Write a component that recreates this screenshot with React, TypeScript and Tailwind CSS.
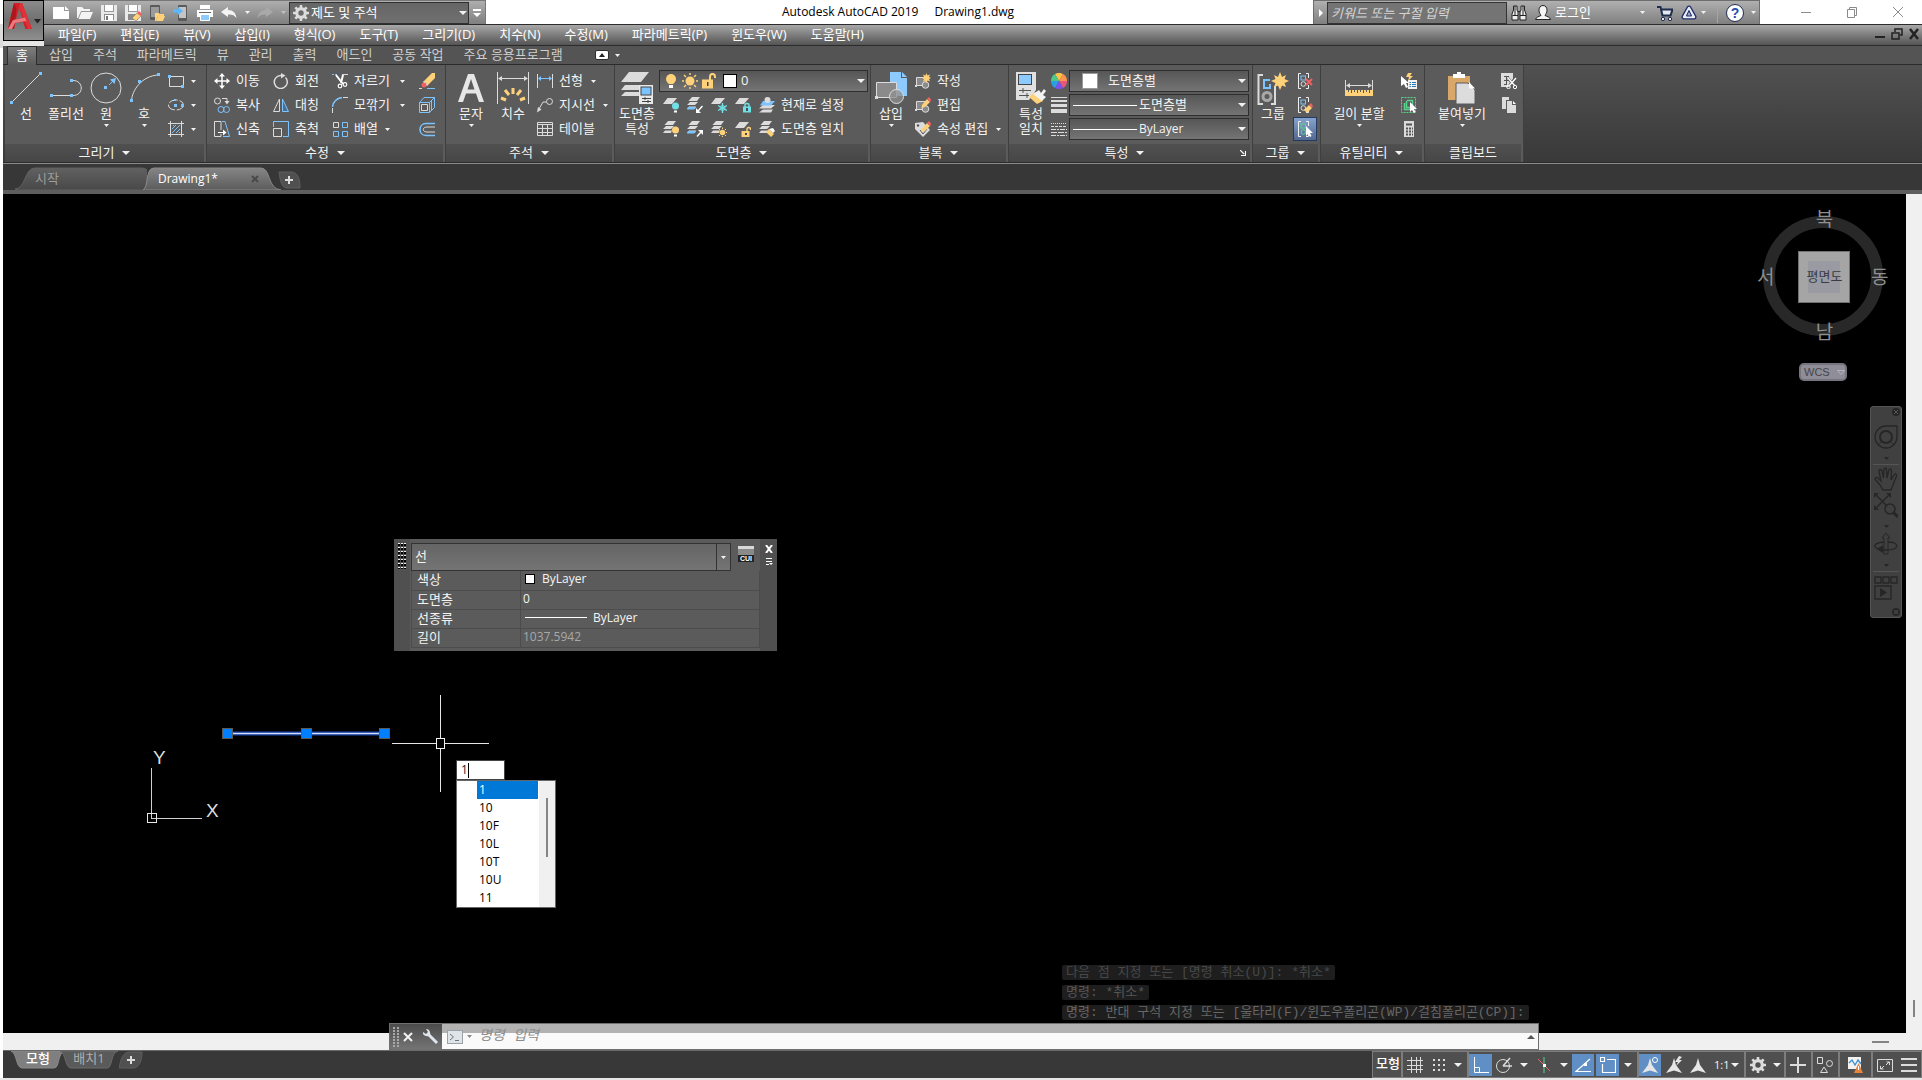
import React from "react";

type Kids = { children?: React.ReactNode };

/* ---------- shared drawing helpers ---------- */

const L = "#dcdcdc";
const B = "#7cc4ff";
const Y = "#ffd27a";

function Svg({ w = 16, h = 16, children }: Kids & { w?: number; h?: number }) {
  return (
    <svg width={w} height={h} viewBox={`0 0 ${w} ${h}`} fill="none" className="block shrink-0" aria-hidden="true">
      {children}
    </svg>
  );
}

function Dot({ x, y, s = 3 }: { x: number; y: number; s?: number }) {
  return <rect x={x} y={y} width={s} height={s} fill={B} />;
}

function Tri({ big = false, color = "#f2f2f2" }: { big?: boolean; color?: string }) {
  return big ? (
    <Svg w={8} h={4}><path d="M0 0H8L4 4Z" fill={color} /></Svg>
  ) : (
    <Svg w={5} h={3}><path d="M0 0H5L2.5 3Z" fill={color} /></Svg>
  );
}

/* ---------- icons: draw & modify ---------- */

const IcLine = () => (
  <Svg w={32} h={32}><path d="M2.5 29.5L29.5 2.5" stroke={L} /><Dot x={0} y={29} /><Dot x={29} y={0} /></Svg>
);
const IcPoly = () => (
  <Svg w={32} h={32}><path d="M3 23.5H21M23 8.500C34 8.500 34 23.500 23 23.500" stroke={L} /><Dot x={0} y={22} /><Dot x={20} y={22} /><Dot x={20} y={7} /></Svg>
);
const IcCircle = () => (
  <Svg w={32} h={32}><circle cx="16" cy="16" r="15" stroke={L} /><path d="M19 13L23 9" stroke={B} /><path d="M26 6L24.500 12L20 7.500Z" fill={B} /><Dot x={14} y={14} /></Svg>
);
const IcArc = () => (
  <Svg w={32} h={32}><path d="M3.500 29C4 18 14 4 30 3" stroke={L} /><Dot x={2} y={27} /><Dot x={10} y={8} /><Dot x={29} y={1} /></Svg>
);
const IcRect = () => (<Svg><path d="M1.500 3.500H15.500V13.500H1.500Z" stroke={L} /><Dot x={0} y={2} /><Dot x={13} y={12} /></Svg>);
const IcEllipse = () => (<Svg><ellipse cx="8" cy="8" rx="7.500" ry="5" stroke={L} strokeDasharray="9 2" /><Dot x={6} y={7} /><Dot x={6} y={2} s={2} /><Dot x={13} y={7} /></Svg>);
const IcHatch = () => (
  <Svg><path d="M2.500 0V16M13.500 0V16M0 2.500H16M0 13.500H16" stroke={L} /><path d="M4 8L8 4M4 12L12 4M8 12L12 8M5 5L6 4M11 12L12 11" stroke={B} /></Svg>
);
const IcMove = () => (
  <Svg><path d="M8 2V14M2 8H14" stroke="#fff" strokeWidth="1.500" /><path d="M8 0L11 3.500H5ZM8 16L11 12.500H5ZM0 8L3.500 5V11ZM16 8L12.500 5V11Z" fill="#fff" /></Svg>
);
const IcCopy = () => (
  <Svg><circle cx="3.500" cy="4" r="3" stroke={L} /><path d="M8 1.500H13V5" stroke={L} /><path d="M10.500 4H15.500L13 7.500Z" fill={L} /><circle cx="7" cy="12.500" r="3" stroke={B} /><circle cx="12.500" cy="12.500" r="3" stroke={B} /></Svg>
);
const IcStretch = () => (
  <Svg><path d="M7 15.500H.500V.500H7V9M7 13V15.500" stroke={L} /><path d="M4 11.500H11" stroke="#fff" /><path d="M9 8.500L12.500 11.500L9 14.500Z" fill="#fff" /><path d="M8 .500H11L15.500 15.500H9" stroke={B} /></Svg>
);
const IcRotate = () => (
  <Svg><path d="M12.500 4.500A6.500 6.500 0 1 1 8 2.500" stroke={L} strokeWidth="1.500" /><path d="M8 0L12.500 2.500L8 5.500Z" fill={L} /></Svg>
);
const IcMirror = () => (
  <Svg><path d="M6.500 2V14.500H.500Z" stroke={L} /><path d="M9.500 2V14.500H15.500Z" fill="#4a6f8f" stroke={B} /></Svg>
);
const IcScale = () => (<Svg><path d="M.500 6V.500H15.500V15.500H10" stroke={B} /><path d="M.500 7.500H8.500V15.500H.500Z" stroke={L} /></Svg>);
const IcTrim = () => (
  <Svg><path d="M0 1.500H6" stroke={B} strokeDasharray="2 1" /><path d="M10 1.500H16" stroke={L} /><path d="M4 2L11 11M11 2L9 10" stroke="#fff" strokeWidth="2" /><circle cx="8" cy="13" r="1.800" stroke="#fff" strokeWidth="1.200" /><circle cx="13" cy="11.500" r="1.800" stroke="#fff" strokeWidth="1.200" /></Svg>
);
const IcFillet = () => (<Svg><path d="M.500 10C1 5 5 1 10 .500" stroke={B} strokeWidth="1.500" /><path d="M11 .500H16M.500 11V16" stroke={L} /></Svg>);
const IcArray = () => (
  <Svg><path d="M1.500 1.500H6.500V6.500H1.500Z" stroke={L} /><path d="M10.500 1.500H15.500V6.500H10.500ZM1.500 10.500H6.500V15.500H1.500ZM10.500 10.500H15.500V15.500H10.500Z" stroke={B} /></Svg>
);
const IcErase = () => (
  <Svg><path d="M16 0V5L9 12L5 8L13 0Z" fill={Y} /><path d="M9 12L8 13L4 9L5 8Z" fill="#fff" /><circle cx="5" cy="12" r="2.500" fill="#f06060" /><path d="M0 15.500H3" stroke={L} /><path d="M8 15.500H16" stroke={B} /></Svg>
);
const IcExplode = () => (
  <Svg><path d="M.500 5.500H10.500V15.500H.500Z" stroke={B} /><path d="M2.500 7.500H8.500V13.500H2.500Z" stroke={L} /><path d="M.500 5.500L5 .500H15.500V10.500L10.500 15.500M10.500 5.500L15.500 .500M12.500 4V13" stroke={B} /></Svg>
);
const IcOffset = () => (
  <Svg><path d="M16 2.500H7C-1 2.500 -1 14.500 7 14.500H16" stroke={B} strokeWidth="1.500" /><path d="M16 6H8C3 6 3 11 8 11H16" stroke={L} /></Svg>
);

/* ---------- icons: annotation ---------- */

const IcText = () => (<Svg w={28} h={32}><path d="M1 30L11 2H17L27 30H22L19 21.500H9L6 30ZM10.500 17.500H17.500L14 7Z" fill="#e6e6e6" /></Svg>);
const IcDim = () => (
  <Svg w={32} h={32}><path d="M.500 0V32M31.500 0V32M3 6.500H29" stroke={L} /><path d="M1 6.500L5 4V9ZM31 6.500L27 4V9Z" fill={L} /><path d="M16 16V22M8 18L12 23M24 18L20 23M4 26L9 28M28 26L23 28" stroke={Y} strokeWidth="3" /></Svg>
);
const IcLinear = () => (<Svg><path d="M.500 1V15M15.500 1V15" stroke={L} /><path d="M3 5.500H13" stroke={B} /><path d="M1 5.500L4 3V8ZM15 5.500L12 3V8Z" fill={B} /></Svg>);
const IcLeader = () => (<Svg><circle cx="12.500" cy="4.500" r="3" stroke={L} /><path d="M9.500 5H6L2 12" stroke={L} /><path d="M0 15.500L1 10L4.500 12.500Z" fill={L} /></Svg>);
const IcTable = () => (<Svg><path d="M.500 1.500H15.500V14.500H.500ZM.500 3.500H15.500M.500 7.500H15.500M.500 11.500H15.500M5.500 3V14M10.500 3V14" stroke={L} /></Svg>);

/* ---------- icons: layers ---------- */

const IcLayerProps = () => (
  <Svg w={32} h={32}>
    <path d="M8 0H28L20 10H0ZM4 13H21L18 18H0ZM4 20H18V24H0Z" fill={L} />
    <rect x="18" y="13" width="14" height="19" fill="#e8e8e8" /><rect x="20" y="15" width="10" height="8" fill={B} stroke="#444" />
    <path d="M21 26.500H30M21 29.500H30M24 25V28M27 28V31" stroke="#444" />
  </Svg>
);
const Sheet = () => <path d="M4.500 1H14L9 7H0Z" fill={L} />;
const Sheets = () => (
  <><path d="M5 0H13L10 4H1.500ZM3 5H11L8 8H0Z" fill={L} /><path d="M2 9.500H9L8 12H0Z" fill={L} /></>
);
const IcLayOff = () => (<Svg><Sheet /><circle cx="12.500" cy="9" r="3.500" fill="#6fe0e6" /><path d="M11 14.500H14" stroke="#fff" strokeWidth="2" /></Svg>);
const IcLayIso = () => (<Svg><Sheets /><path d="M1 10H9L7 12.500H0Z" fill={B} /><path d="M15.500 9L11 14" stroke="#fff" strokeWidth="1.500" /><path d="M9 16V11L14 16Z" fill="#fff" /></Svg>);
const IcLayFreeze = () => (<Svg><Sheet /><path d="M11.500 6V16M7 8.500L16 13.500M7 13.500L16 8.500" stroke="#6fe0e6" strokeWidth="1.400" /><circle cx="11.500" cy="11" r="2.500" stroke="#6fe0e6" /></Svg>);
const IcLayLock = () => (<Svg><Sheet /><path d="M10 10V8C10 6 14 6 14 8V10" stroke="#6fe0e6" strokeWidth="1.400" /><rect x="8" y="9.500" width="8" height="6" fill="#6fe0e6" /><rect x="11" y="11" width="2" height="3" fill="#4a4a4a" /></Svg>);
const IcLaySet = () => (<Svg><path d="M4 8H16L12 11.500H0ZM4 12.500H14L12 15.500H0Z" fill={L} /><path d="M4 4H16L12 8.500H1Z" fill={B} /><circle cx="8.500" cy="3" r="3" fill={L} /></Svg>);
const IcLayOn = () => (<Svg><Sheets /><circle cx="12.500" cy="9" r="3.500" fill={Y} /><path d="M11 14.500H14" stroke="#fff" strokeWidth="2" /></Svg>);
const IcLayUniso = () => (<Svg><Sheets /><path d="M1 10H9L7 12.500H0Z" fill={B} /><path d="M10 15.500L14 11" stroke="#fff" strokeWidth="1.500" /><path d="M16 9V14L11 9Z" fill="#fff" /></Svg>);
const IcLayThaw = () => (<Svg><Sheets /><circle cx="11.500" cy="11.500" r="2.800" fill={Y} /><path d="M11.500 6.500V8M11.500 15V16M6.500 11.500H8M15 11.500H16M8 8L9 9M15 8L14 9M8 15L9 14M15 15L14 14" stroke={Y} /></Svg>);
const IcLayUnlock = () => (<Svg><Sheet /><path d="M12 10V8C12 6 15.500 6 15.500 8V9" stroke={Y} strokeWidth="1.400" /><rect x="6.500" y="10" width="8" height="6" fill={Y} /><rect x="10" y="12" width="2" height="2" fill="#4a4a4a" /></Svg>);
const IcLayMatch = () => (<Svg><Sheets /><path d="M7 11L10 8L15 13L12 16Z" fill={Y} /><path d="M10 8L14 7L16 10L14 12Z" fill="#fff" /></Svg>);
const IcBulb = () => (<Svg><circle cx="8" cy="6" r="5" fill={Y} /><path d="M5.500 7H10.500V11H5.500Z" fill={Y} /><rect x="6" y="12" width="4" height="3" fill="#fff" /></Svg>);
const IcSun = () => (<Svg><circle cx="8" cy="8" r="4.500" fill={Y} /><path d="M8 0V2M8 14V16M0 8H2M14 8H16M2 2L4 4M14 2L12 4M2 14L4 12M14 14L12 12" stroke={Y} strokeWidth="1.400" /></Svg>);
const IcUnlock = () => (<Svg><path d="M9 7V3.500C9 0 14 0 14 3.500V5" stroke={Y} strokeWidth="2" /><rect x="1" y="6.500" width="11" height="9" fill={Y} /><rect x="6" y="9" width="1.500" height="4" fill="#444" /></Svg>);

/* ---------- icons: block, properties, group, utilities, clipboard ---------- */

const IcInsert = () => (
  <Svg w={32} h={34}><path d="M15 0H26V6H32V24H15Z" fill="#8ccaff" /><path d="M27 0L32 5H27Z" fill="#8ccaff" /><path d="M1.500 10.500H21.500V25.500H1.500Z" fill="#8a8a8a" stroke={L} /><circle cx="21.500" cy="24.500" r="7" fill="#8f8f8f" fillOpacity=".75" stroke={L} /><rect x="0" y="24" width="3" height="3" fill={L} /></Svg>
);
const BlockBase = () => (<><path d="M1.500 4.500H11V12.500H1.500Z" fill="#8a8a8a" stroke={L} /><circle cx="10.500" cy="12" r="3.300" fill="#8a8a8a" stroke={L} /><rect x="0" y="12" width="2" height="2" fill={L} /></>);
const Pencil = () => (<><path d="M7 8L12 2L15 5L10 10L6.500 11Z" fill={Y} /><path d="M12 2L14 0L16.500 3L15 5Z" fill="#f06060" /></>);
const IcBlkNew = () => (<Svg><BlockBase /><path d="M11.500 0L12.500 2.500L15 1.500L14 4L16 5L14 6L15 8.500L12.500 7.500L11.500 10L10.500 7.500L8 8.500L9 6L7 5L9 4L8 1.500L10.500 2.500Z" fill={Y} /></Svg>);
const IcBlkEdit = () => (<Svg><BlockBase /><Pencil /></Svg>);
const IcAttr = () => (<Svg><path d="M0 2L8 1L15 9L8 16L0 8Z" fill={L} /><circle cx="3" cy="4.500" r="1.200" fill="#555" /><path d="M5 9L8 13L12 8" stroke="#555" /><Pencil /></Svg>);
const IcMatch = () => (
  <Svg w={32} h={32}><path d="M1 0H21V18L14 28H1Z" fill="#e0e0e0" /><rect x="3.500" y="2.500" width="13" height="10" fill="#8ccaff" stroke="#444" /><path d="M4 18.500H16M4 23.500H14M8 16V21M12 21V26" stroke="#555" /><path d="M14 25L20 20L28 29L22 32Z" fill={Y} /><path d="M18 22L24 18L26 21L29 17L31 19L28 23L31 25L27 29Z" fill="#f2f2f2" /></Svg>
);
const IcWheel = () => (
  <Svg><path d="M8 8L4 1A8 8 0 0 1 12 1Z" fill="#ffc24a" /><path d="M8 8L12 1A8 8 0 0 1 16 8Z" fill="#ff944d" /><path d="M8 8H16A8 8 0 0 1 12 15Z" fill="#e8587a" /><path d="M8 8L12 15A8 8 0 0 1 4 15Z" fill="#7b52f0" /><path d="M8 8L4 15A8 8 0 0 1 0 8Z" fill="#2c9fe0" /><path d="M8 8H0A8 8 0 0 1 4 1Z" fill="#4fc98a" /></Svg>
);
const IcWeights = () => (<Svg><path d="M0 .500H16" stroke={L} /><path d="M0 4H16" stroke={L} strokeWidth="2" /><path d="M0 8.500H16" stroke={L} strokeWidth="3" /><path d="M0 14H16" stroke={L} strokeWidth="4" /></Svg>);
const IcTypes = () => (<Svg><path d="M0 2.500H16" stroke={L} strokeDasharray="1 1" /><path d="M0 5.500H16" stroke={L} strokeDasharray="3 1" /><path d="M0 8.500H16M0 14.500H16" stroke={L} strokeDasharray="5 1 2 1" /><path d="M0 11.500H16" stroke={L} strokeDasharray="6 1" /></Svg>);
const IcGroup = () => (
  <Svg w={32} h={34}><path d="M6 3H1.500V32H6M14 32H18V14" stroke={L} strokeWidth="2" /><path d="M8 8H13M7 7V16H13V12" stroke={B} strokeWidth="2" /><circle cx="10" cy="24.500" r="4" stroke="#a8a8a8" strokeWidth="3" /><path d="M23 0L25 5L29 3L27.500 7L32 9L27.500 11L29 15L25 13.500L23 18L21 13.500L17 15L18.500 11L14 9L18.500 7L17 3L21 5Z" fill={Y} /></Svg>
);
const GroupBase = ({ c = B, r = L }: { c?: string; r?: string }) => (<><path d="M4 .500H1.500V15.500H4M9 .500H11.500V5M9 15.500H11.500V12" stroke="#f0f0f0" /><rect x="4" y="3" width="4.500" height="4" stroke={c} /><circle cx="6.300" cy="11" r="2.300" stroke={r} /></>);
const IcUngroup = () => (<Svg><GroupBase /><path d="M9 6L15 12M15 6L9 12" stroke="#f06060" strokeWidth="2" /></Svg>);
const IcGroupEdit = () => (<Svg><GroupBase /><path d="M7 13L12 8L15 11L10 16Z" fill={Y} /><path d="M12 8L14 6L16 9L15 11Z" fill="#f06060" /></Svg>);
const IcGroupSel = () => (<Svg><GroupBase c="#58d68d" r="#58d68d" /><path d="M9 5V15L11 13L13 16L14.500 15L13 12H16Z" fill="#fff" /></Svg>);
const IcMeasure = () => (
  <Svg w={28} h={32}><path d="M.500 8V20M27.500 8V20M3 13.500H25" stroke={L} /><path d="M1 13.500L5 11V16ZM27 13.500L23 11V16Z" fill={L} /><rect x="0" y="18" width="28" height="6" fill={Y} /><path d="M3.500 18V20M6.500 18V21M9.500 18V20M12.500 18V21M15.500 18V20M18.500 18V21M21.500 18V20M24.500 18V21" stroke="#5b5b5b" /></Svg>
);
const IcQuickSel = () => (<Svg><path d="M0 3V13L3 11L5 15L7 14L5 10H8Z" fill="#fff" /><path d="M7 0L11 0L9 3H12L7 8L8 4H5Z" fill={Y} /><rect x="7" y="7" width="9" height="9" fill="#f2f2f2" /><path d="M8.500 9.500H10M8.500 11.500H10M8.500 13.500H10M11 9.500H15M11 11.500H15M11 13.500H15" stroke="#2a78b8" /></Svg>);
const IcSelAll = () => (<Svg><path d="M.500 .500H14.500V15.500H.500Z" stroke="#58d68d" strokeDasharray="2 1" /><path d="M6 3.500H11.500V10M3.500 6V12.500H9M5.500 4V10.500H9" stroke="#58d68d" strokeWidth="1.500" /><path d="M9 5V15L11 13L13 16L14.500 15L13 12H16Z" fill="#fff" /></Svg>);
const IcCalc = () => (<Svg><rect x="3" y="0" width="10" height="16" fill={L} /><path d="M5 3.500H11" stroke="#555" strokeWidth="2" /><path d="M5 7.500H12M5 10.500H12M5 13.500H12" stroke="#555" strokeWidth="2" strokeDasharray="2 1" /></Svg>);
const IcPaste = () => (
  <Svg w={28} h={32}><rect x="0" y="4" width="22" height="24" fill="#d9a868" /><path d="M5 2H9V0H13V2H17V6H5Z" fill="#fff" /><path d="M8 11H20L27 18V32H8Z" fill={L} stroke="#5b5b5b" /><path d="M21 10L27 16.500H21Z" fill="#fff" /></Svg>
);
const IcCut = () => (<Svg><path d="M0 0H12V8L8 14H0Z" fill={L} /><path d="M3 3.500H8M3 7.500H9M3 11.500H6M5.500 3V12" stroke="#555" /><path d="M7 5L14 14M14 5L8 13" stroke="#555" strokeWidth="2.500" /><path d="M7 5L14 13M15 5L8 13" stroke="#fff" strokeWidth="1.400" /><circle cx="7.500" cy="14" r="1.700" stroke="#fff" /><circle cx="14" cy="14" r="1.700" stroke="#fff" /></Svg>);
const IcCopyClip = () => (<Svg><path d="M1 0H8V3H5V12H1Z" fill={L} /><path d="M6 4H11V8H15V16H6Z" fill={L} /><path d="M12 4L15 7H12Z" fill="#fff" /></Svg>);

/* ---------- icons: title bar ---------- */

const IcNew = () => (<Svg><path d="M0 2H11V6H16V14H0Z" fill="#fff" /><path d="M12 1L16 5H12Z" fill="#fff" /></Svg>);
const IcOpen = () => (<Svg><path d="M0 2H5L7 4H13V6H4L1 13H0Z" fill="#f4f4f4" /><path d="M4.500 7H16L13 14H1.500Z" fill="#f4f4f4" /></Svg>);
const IcSave = () => (<Svg><path d="M0 0H16V16H0Z" fill="#e9e9e9" /><path d="M3 0H13V7H3Z" fill="#9a9a9a" /><path d="M4 0H12V6H4Z" fill="#fff" /><path d="M3 9H13V15H3Z" fill="#8a8a8a" /><path d="M4 10H12V16H4Z" fill="#fff" /><path d="M5 11H7V15H5Z" fill="#777" /></Svg>);
const IcSaveAs = () => (<Svg><path d="M0 0H16V16H0Z" fill="#e9e9e9" /><path d="M3 0H13V7H3Z" fill="#9a9a9a" /><path d="M4 0H12V6H4Z" fill="#fff" /><path d="M3 9H13V15H3Z" fill="#8a8a8a" /><path d="M7 13L12 8L16 11L11 16Z" fill={Y} stroke="#666" strokeWidth=".5" /><path d="M12 8L14 6L16 8V11Z" fill="#f06060" /></Svg>);
const IcOpenMob = () => (<Svg><rect x="1" y="0" width="10" height="15" rx="1" fill="#5a5a5a" /><rect x="2" y="2" width="8" height="10" fill="#9b9b9b" /><path d="M6 8H10L11 9H15V11H9L7 16H6Z" fill={Y} /><path d="M9 11H16L14 16H7Z" fill={Y} /></Svg>);
const IcSaveMob = () => (<Svg><rect x="5" y="0" width="9" height="16" rx="1" fill="#5a5a5a" /><rect x="6" y="2" width="7" height="11" fill="#c4c4c4" /><path d="M0 6H6" stroke="#5ab8ff" strokeWidth="3" /><path d="M5 2L10 6L5 10Z" fill="#5ab8ff" /></Svg>);
const IcPrint = () => (<Svg><path d="M3 0H13V4H3Z" fill="#fff" /><path d="M0 5H16V12H0Z" fill="#fff" /><path d="M2 7.500H14" stroke="#666" /><path d="M3.500 9.500H12.500V15.500H3.500Z" fill="#8ccaff" stroke="#fff" /></Svg>);
const IcUndo = ({ c = "#f4f4f4" }: { c?: string }) => (<Svg><path d="M0 7L7 2V5C12 5 15 8 15.500 13C13 10 11 9 7 9.500V12Z" fill={c} /></Svg>);
const IcRedo = () => (<Svg><path d="M16 7L9 2V5C4 5 1 8 .500 13C3 10 5 9 9 9.500V12Z" fill="#a9a9a9" /></Svg>);
const IcGear = ({ c = L }: { c?: string }) => (
  <Svg><circle cx="8" cy="8" r="4.300" stroke={c} strokeWidth="3.200" /><path d="M8 0V3M8 13V16M0 8H3M13 8H16M2.300 2.300L4.500 4.500M11.500 11.500L13.700 13.700M2.300 13.700L4.500 11.500M11.500 4.500L13.700 2.300" stroke={c} strokeWidth="2.600" /></Svg>
);
const IcBinoc = () => (<Svg><path d="M2.500 1H6V5L7 7V15H1V9L2.500 5ZM10 1H13.500V5L15 9V15H9V7L10 5Z" fill="#eee" stroke="#222" /><path d="M7 6.500H9M1.500 10.500H7M9 10.500H15M4 1V10M12 1V10" stroke="#222" /></Svg>);
const IcUser = () => (<Svg><path d="M8 .500C11 .500 12 3 12 5.500C12 8 10.500 9 10 10.500C12 11.500 15 12 15.500 14.500H.500C1 12 4 11.500 6 10.500C5.500 9 4 8 4 5.500C4 3 5 .500 8 .500Z" fill="#f4f4f4" stroke="#222" /></Svg>);
const IcCart = () => (<Svg><path d="M0 2H3.500L5.500 10.500H13.500L15.500 4.500H4.500" stroke="#1f2c4d" strokeWidth="2" fill="#e4e8f0" /><circle cx="6" cy="14" r="1.700" fill="#e4e8f0" stroke="#1f2c4d" /><circle cx="13" cy="14" r="1.700" fill="#e4e8f0" stroke="#1f2c4d" /></Svg>);
const IcExchange = () => (<Svg><path d="M8 3L3 12H13Z" stroke="#1f2c6a" strokeWidth="5" strokeLinejoin="round" /><path d="M8 3L3 12H13Z" stroke="#e8ecf5" strokeWidth="2.500" strokeLinejoin="round" /><path d="M8 5.500L5.500 11H10.500Z" fill="#aab" stroke="#1f2c6a" /></Svg>);

/* ---------- building blocks ---------- */

function Big({ icon, label, label2, arrow = false, w }: { icon: React.ReactNode; label: string; label2?: string; arrow?: boolean; w: string }) {
  return (
    <button type="button" className={`flex shrink-0 flex-col items-center pt-[3px] ${w}`}>
      <span className="flex h-8 items-start justify-center">{icon}</span>
      <span className="mt-0.5 whitespace-nowrap leading-[15px]">{label}</span>
      {label2 && <span className="whitespace-nowrap leading-[15px]">{label2}</span>}
      {arrow && <span className="mt-[3px]"><Tri /></span>}
    </button>
  );
}

function Row({ icon, label, arrow, title }: { icon: React.ReactNode; label?: string; arrow?: string; title?: string }) {
  return (
    <button type="button" aria-label={label ? undefined : title} className="flex h-6 shrink-0 items-center whitespace-nowrap">
      {icon}
      {label && <span className="ml-1.5 pb-0.5 leading-[15px]">{label}</span>}
      {arrow && <span className={arrow}><Tri /></span>}
    </button>
  );
}

function Panel({ title, w, children, arrow = true, launcher = false }: Kids & { title: string; w: string; arrow?: boolean; launcher?: boolean }) {
  return (
    <section aria-label={title} className={`flex shrink-0 flex-col border-r border-[#3f3f3f] bg-[#5b5b5b] ${w}`}>
      <div className="flex h-[79px] items-start pt-1">{children}</div>
      <div className="mr-0.5 flex h-[18px] items-center justify-center gap-2 bg-linear-to-b from-[#505050] to-[#464646] leading-[15px]">
        {launcher && <span className="w-1" />}
        <span className={launcher ? "ml-auto pb-0.5" : "pb-0.5"}>{title}</span>
        {arrow && <Tri big />}
        {launcher && (
          <button type="button" aria-label="특성 팔레트" className="ml-auto flex w-3.5 justify-center">
            <Svg w={6} h={6}><path d="M0 0L4 4M5.500 1V5.500H1" stroke="#fff" strokeWidth="1.200" /></Svg>
          </button>
        )}
      </div>
    </section>
  );
}

function Combo({ label, options, children, cls = "" }: Kids & { label: string; options: string[]; cls?: string }) {
  return (
    <label className={`relative flex h-[22px] items-center border border-[#2e2e2e] bg-linear-to-b from-[#565656] to-[#747474] ${cls}`}>
      {children}
      <select aria-label={label} className="h-full min-w-0 flex-1 appearance-none bg-transparent pb-0.5 leading-[15px] outline-none">
        {options.map((o) => <option key={o}>{o}</option>)}
      </select>
      <span className="pointer-events-none absolute right-0.5"><Tri big /></span>
    </label>
  );
}

const MENUS = ["파일(F)", "편집(E)", "뷰(V)", "삽입(I)", "형식(O)", "도구(T)", "그리기(D)", "치수(N)", "수정(M)", "파라메트릭(P)", "윈도우(W)", "도움말(H)"];
const TABS = ["삽입", "주석", "파라메트릭", "뷰", "관리", "출력", "애드인", "공동 작업", "주요 응용프로그램"];
const SUGGESTIONS = ["1", "10", "10F", "10L", "10T", "10U", "11"];

/* ---------- title bar ---------- */

function TitleBar() {
  const tool = "flex w-6 justify-center";
  return (
    <div className="flex h-6 items-stretch bg-white">
      <div className="flex items-center border-t border-[#777] bg-linear-to-b from-[#aeaeae] to-[#7f7f7f] pl-[5px]">
        <button type="button" aria-label="새로 만들기" className={tool}><IcNew /></button>
        <button type="button" aria-label="열기" className={tool}><IcOpen /></button>
        <button type="button" aria-label="저장" className={tool}><IcSave /></button>
        <button type="button" aria-label="다른 이름으로 저장" className={tool}><IcSaveAs /></button>
        <button type="button" aria-label="모바일에서 열기" className={tool}><IcOpenMob /></button>
        <button type="button" aria-label="모바일에 저장" className={tool}><IcSaveMob /></button>
        <button type="button" aria-label="플롯" className={tool}><IcPrint /></button>
        <button type="button" aria-label="명령 취소" className="flex w-9 items-center gap-2 pl-1"><IcUndo /><Tri /></button>
        <button type="button" aria-label="명령 복구" className="flex w-9 items-center gap-2 pl-1"><IcRedo /><Tri color="#c0c0c0" /></button>
        <label className="relative flex h-[22px] w-[180px] items-center gap-0.5 border border-[#303030] bg-linear-to-b from-[#666] to-[#707070] pl-[3px] text-white">
          <IcGear />
          <select aria-label="작업공간" className="min-w-0 flex-1 appearance-none bg-transparent leading-[15px] outline-none"><option>제도 및 주석</option></select>
          <span className="pointer-events-none absolute right-px"><Tri big /></span>
        </label>
        <button type="button" aria-label="신속 접근 도구막대 사용자화" className="flex w-[17px] flex-col items-center gap-0.5 self-stretch border-r border-[#777] pt-2">
          <span className="h-0.5 w-2 bg-white" /><Tri big color="#fff" />
        </button>
      </div>
      <h1 className="flex flex-1 items-center justify-center gap-4 pb-px pr-[3px] text-[12px] leading-4 text-black">
        <span>Autodesk AutoCAD 2019</span><span>Drawing1.dwg</span>
      </h1>
      <div className="flex w-[447px] items-center border border-b-0 border-[#6d6d6d] bg-linear-to-b from-[#b0b0b0] to-[#7f7f7f] text-white">
        <button type="button" aria-label="검색 축소" className="flex w-[13px] justify-center"><Svg w={4} h={8}><path d="M0 0L4 4L0 8Z" fill="#fff" /></Svg></button>
        <input aria-label="검색" placeholder="키워드 또는 구절 입력" className="h-[22px] w-[180px] border border-[#333] bg-[#747474] px-[3px] italic leading-[15px] outline-none placeholder:text-[#d4d4d4]" />
        <button type="button" aria-label="찾기" className="ml-1 flex w-6"><IcBinoc /></button>
        <button type="button" className="flex items-center gap-1"><IcUser />로그인</button>
        <span className="ml-auto mr-3"><Tri /></span>
        <button type="button" aria-label="Autodesk App Store" className="flex w-6"><IcCart /></button>
        <button type="button" aria-label="연결 유지" className="flex w-9 items-center gap-1"><IcExchange /><Tri /></button>
        <span className="mr-2 h-5 w-px bg-[#a5a5a5]" />
        <button type="button" aria-label="도움말" className="mr-[3px] flex items-center gap-[7px]">
          <span className="flex size-[18px] items-center justify-center rounded-full border border-[#1f2c4d] bg-white font-['Liberation_Sans',sans-serif] text-[14px] font-bold leading-none text-[#1d4fb0]">?</span><Tri />
        </button>
      </div>
      <div className="flex w-[162px] items-center justify-end pr-px text-[#8a8a8a]">
        <button type="button" aria-label="최소화" className="flex w-[46px] justify-center"><Svg w={12} h={12}><path d="M1 6.500H11" stroke="currentColor" /></Svg></button>
        <button type="button" aria-label="이전 크기로 복원" className="flex w-[46px] justify-center"><Svg w={12} h={12}><path d="M1.500 3.500H8.500V11.500H1.500ZM3.500 3V1.500H10.500V9.500H9" stroke="currentColor" /></Svg></button>
        <button type="button" aria-label="닫기" className="flex w-[46px] justify-center"><Svg w={12} h={12}><path d="M1 1L11 11M11 1L1 11" stroke="currentColor" /></Svg></button>
      </div>
    </div>
  );
}

function MenuBar() {
  return (
    <nav className="flex h-[22px] items-center gap-6 border-y border-[#2b2b2b] bg-linear-to-b from-[#a8a8a8] to-[#555] pb-0.5 pl-3.5 pr-[3px] leading-[15px] text-white">
      {MENUS.map((m) => <button type="button" key={m} className="whitespace-nowrap">{m}</button>)}
      <div className="ml-auto flex items-center gap-1.5 text-[#222]">
        <button type="button" aria-label="도면 최소화"><Svg w={10} h={12}><path d="M0 9H10" stroke="#222" strokeWidth="2" /></Svg></button>
        <button type="button" aria-label="도면 복원"><Svg w={12} h={12}><path d="M1 5H8V11H1ZM4 4V1H11V7H9" stroke="#222" strokeWidth="1.500" /></Svg></button>
        <button type="button" aria-label="도면 닫기"><Svg w={10} h={12}><path d="M1 1L9 11M9 1L1 11" stroke="#222" strokeWidth="2.500" /></Svg></button>
      </div>
    </nav>
  );
}

function Header() {
  return (
    <header className="flex">
      <button type="button" aria-label="응용프로그램 메뉴" className="mb-[5px] flex w-[41px] shrink-0 items-start gap-0.5 border border-black bg-linear-to-b from-[#8a8a8a] via-[#707070] to-[#8f8f8f] pl-1 pt-0.5">
        <Svg w={24} h={27}>
          <path d="M6 0H14L24 26H17.500L15 19L7.500 20L6 26H0Z" fill="#cf2027" />
          <path d="M6 0L8.500 6L6 26H0Z" fill="#b0151c" />
          <path d="M11 5L8 16L14.500 15Z" fill="#7d6a6a" />
          <path d="M14 0L24 26H20L11 4L12 0Z" fill="#e03038" />
          <path d="M1 24L5 17L17 14.500L18.500 18L7 20L4 26H0Z" fill="#e87a7f" />
        </Svg>
        <span className="mt-4"><Svg w={7} h={5}><path d="M0 0H7L3.500 4.500Z" fill="#222" /></Svg></span>
      </button>
      <div className="min-w-0 flex-1"><TitleBar /><MenuBar /></div>
    </header>
  );
}

/* ---------- ribbon ---------- */

function RibbonTabs() {
  return (
    <div role="tablist" className="flex h-[19px] items-center gap-5 border-b border-[#2b2b2b] bg-[#545454] pl-1 leading-[15px] text-[#cfcfcf]">
      <button type="button" role="tab" aria-selected="true" className="-mr-2 -mb-px flex w-[30px] items-center justify-center self-stretch border border-b-0 border-[#2e2e2e] bg-linear-to-b from-[#7e7e7e] to-[#5b5b5b] pb-0.5 text-white">홈</button>
      {TABS.map((t) => <button type="button" role="tab" key={t} className="whitespace-nowrap pb-0.5">{t}</button>)}
      <button type="button" aria-label="리본 최소화" className="ml-3 flex items-center gap-1.5">
        <span className="flex h-2.5 w-3.5 items-center justify-center rounded-xs border border-[#2e2e2e] bg-white"><Svg w={6} h={4}><path d="M0 4L3 0L6 4Z" fill="#222" /></Svg></span>
        <Tri />
      </button>
    </div>
  );
}

function Ribbon() {
  return (
    <div className="flex border-b border-[#2b2b2b] bg-linear-to-b from-[#515151] to-[#393939] pl-0.5 text-[#f4f4f4]">
      <Panel title="그리기" w="w-[202px]">
        <div className="flex gap-1.5 pl-[5px]">
          <Big icon={<IcLine />} label="선" w="w-8" />
          <Big icon={<IcPoly />} label="폴리선" w="w-9" />
          <Big icon={<IcCircle />} label="원" arrow w="w-8" />
          <Big icon={<IcArc />} label="호" arrow w="w-8" />
          <div className="flex flex-col pl-0.5">
            <Row icon={<IcRect />} title="직사각형" arrow="ml-[7px]" />
            <Row icon={<IcEllipse />} title="타원" arrow="ml-[7px]" />
            <Row icon={<IcHatch />} title="해치" arrow="ml-[7px]" />
          </div>
        </div>
      </Panel>
      <Panel title="수정" w="w-[239px]">
        <div className="grid grid-cols-[59px_59px_87px_24px] pl-[7px]">
          <Row icon={<IcMove />} label="이동" /><Row icon={<IcRotate />} label="회전" /><Row icon={<IcTrim />} label="자르기" arrow="ml-2.5" /><Row icon={<IcErase />} title="지우기" />
          <Row icon={<IcCopy />} label="복사" /><Row icon={<IcMirror />} label="대칭" /><Row icon={<IcFillet />} label="모깎기" arrow="ml-2.5" /><Row icon={<IcExplode />} title="분해" />
          <Row icon={<IcStretch />} label="신축" /><Row icon={<IcScale />} label="축척" /><Row icon={<IcArray />} label="배열" arrow="ml-[7px]" /><Row icon={<IcOffset />} title="간격띄우기" />
        </div>
      </Panel>
      <Panel title="주석" w="w-[169px]">
        <div className="flex pl-[9px]">
          <Big icon={<IcText />} label="문자" arrow w="w-8" />
          <span className="w-2.5" />
          <Big icon={<IcDim />} label="치수" w="w-8" />
          <div className="flex flex-col pl-2">
            <Row icon={<IcLinear />} label="선형" arrow="ml-2" />
            <Row icon={<IcLeader />} label="지시선" arrow="ml-2" />
            <Row icon={<IcTable />} label="테이블" />
          </div>
        </div>
      </Panel>
      <Panel title="도면층" w="w-[256px]">
        <div className="flex flex-1 pl-1">
          <Big icon={<IcLayerProps />} label="도면층" label2="특성" w="w-9" />
          <div className="ml-1 flex flex-1 flex-col pr-0.5">
            <div className="flex h-6 items-center">
              <Combo label="도면층" options={["0"]} cls="flex-1 gap-[3px] pl-[3px]">
                <IcBulb /><IcSun /><IcUnlock /><span className="ml-[3px] mr-px size-3.5 border border-black bg-white" />
              </Combo>
            </div>
            <div className="flex gap-2 pl-1">
              <Row icon={<IcLayOff />} title="끄기" /><Row icon={<IcLayIso />} title="분리" /><Row icon={<IcLayFreeze />} title="동결" /><Row icon={<IcLayLock />} title="잠금" /><Row icon={<IcLaySet />} label="현재로 설정" />
            </div>
            <div className="flex gap-2 pl-1">
              <Row icon={<IcLayOn />} title="모두 켜기" /><Row icon={<IcLayUniso />} title="분리 해제" /><Row icon={<IcLayThaw />} title="모두 동결 해제" /><Row icon={<IcLayUnlock />} title="잠금 해제" /><Row icon={<IcLayMatch />} label="도면층 일치" />
            </div>
          </div>
        </div>
      </Panel>
      <Panel title="블록" w="w-[138px]">
        <div className="flex pl-1">
          <Big icon={<IcInsert />} label="삽입" arrow w="w-8" />
          <div className="flex flex-col pl-2">
            <Row icon={<IcBlkNew />} label="작성" />
            <Row icon={<IcBlkEdit />} label="편집" />
            <Row icon={<IcAttr />} label="속성 편집" arrow="ml-2" />
          </div>
        </div>
      </Panel>
      <Panel title="특성" w="w-[244px]" launcher>
        <div className="flex flex-1 pl-1.5">
          <Big icon={<IcMatch />} label="특성" label2="일치" w="w-8" />
          <div className="ml-1 flex flex-col"><Row icon={<IcWheel />} title="색상" /><Row icon={<IcWeights />} title="선가중치" /><Row icon={<IcTypes />} title="선종류" /></div>
          <div className="ml-0.5 flex flex-1 flex-col gap-0.5 pr-[3px] pt-px">
            <Combo label="객체 색상" options={["도면층별"]} cls="gap-2.5 pl-3"><span className="size-4 border border-[#999] bg-white" /></Combo>
            <Combo label="선가중치" options={["도면층별"]} cls="gap-0.5 pl-[3px]"><span className="h-px w-16 bg-white" /></Combo>
            <Combo label="선종류" options={["ByLayer"]} cls="gap-0.5 pl-[3px] text-[12px]"><span className="h-px w-16 bg-white" /></Combo>
          </div>
        </div>
      </Panel>
      <Panel title="그룹" w="w-[68px]">
        <div className="flex pl-1">
          <Big icon={<IcGroup />} label="그룹" w="w-8" />
          <div className="ml-1 flex flex-col">
            <span className="pl-1"><Row icon={<IcUngroup />} title="그룹 해제" /></span>
            <span className="pl-1"><Row icon={<IcGroupEdit />} title="그룹 편집" /></span>
            <span className="flex h-6 items-center border border-[#233a63] bg-linear-to-b from-[#86a3ce] to-[#53698f] px-[3px]"><Row icon={<IcGroupSel />} title="그룹 선택" /></span>
          </div>
        </div>
      </Panel>
      <Panel title="유틸리티" w="w-[104px]">
        <div className="flex pl-[11px]">
          <Big icon={<IcMeasure />} label="길이 분할" arrow w="w-[54px]" />
          <div className="ml-[15px] flex flex-col"><Row icon={<IcQuickSel />} title="신속 선택" /><Row icon={<IcSelAll />} title="모두 선택" /><Row icon={<IcCalc />} title="빠른 계산기" /></div>
        </div>
      </Panel>
      <Panel title="클립보드" w="w-[99px]" arrow={false}>
        <div className="flex pl-3">
          <Big icon={<IcPaste />} label="붙여넣기" arrow w="w-[50px]" />
          <div className="ml-3.5 flex flex-col"><Row icon={<IcCut />} title="잘라내기" /><Row icon={<IcCopyClip />} title="클립보드 복사" /></div>
        </div>
      </Panel>
    </div>
  );
}

/* ---------- drawing file tabs ---------- */

function FileTabs() {
  return (
    <div className="flex h-[31px] items-start border-b-4 border-t border-b-[#5e5e5e] border-t-[#8a8a8a] bg-[#373737] pl-3 pt-[3px]">
      <button type="button" className="relative flex h-[23px] w-[132px] items-center pl-5 text-[#9d9d9d]">
        <span className="absolute inset-0">
          <Svg w={132} h={23}>
            <defs><linearGradient id="tabIdle" x2="0" y2="1"><stop stopColor="#616161" /><stop offset="1" stopColor="#484848" /></linearGradient></defs>
            <path d="M0 22C11 22 9 1 20 1H126C132 1 134 4 132 8V23H0Z" fill="url(#tabIdle)" stroke="#606060" />
          </Svg>
        </span>
        <span className="relative">시작</span>
      </button>
      <button type="button" className="relative flex h-[23px] w-[126px] items-center pl-[11px] text-[12px] text-white">
        <span className="absolute inset-y-0 -left-1">
          <Svg w={138} h={23}>
            <defs><linearGradient id="tabLive" x2="0" y2="1"><stop stopColor="#858585" /><stop offset="1" stopColor="#5c5c5c" /></linearGradient></defs>
            <path d="M0 23C6 20 2 1 11 1H118C128 1 124 22 138 23Z" fill="url(#tabLive)" stroke="#8a8a8a" />
          </Svg>
        </span>
        <span className="relative">Drawing1*</span>
        <span className="relative ml-auto mr-[14px]"><Svg w={8} h={8}><path d="M1 1L7 7M7 1L1 7" stroke="#4a4a4a" strokeWidth="2" /></Svg></span>
      </button>
      <button type="button" aria-label="새 도면" className="relative ml-1 mt-1 flex h-[18px] w-6 items-center justify-center">
        <span className="absolute inset-0"><Svg w={24} h={18}><path d="M2 1H14C22 1 23 10 23 17H10C4 17 3 8 2 1Z" fill="#505050" stroke="#5e5e5e" /></Svg></span>
        <span className="relative"><Svg w={8} h={8}><path d="M4 0V8M0 4H8" stroke="#dcdcdc" strokeWidth="2" /></Svg></span>
      </button>
    </div>
  );
}

/* ---------- drawing area ---------- */

function Entities() {
  return (
    <div className="pointer-events-none absolute left-[140px] top-[490px]">
      <svg width="360" height="150" viewBox="0 0 360 150" fill="none">
        <path d="M85 49.500H241" stroke="#0b2258" strokeWidth="5" />
        <path d="M85 49.500H241" stroke="#3a62b8" strokeWidth="3" />
        <path d="M85 49.500H241" stroke="#d5dcf2" />
        {[79, 158, 236].map((x) => <rect key={x} x={x + 0.5} y="44.500" width="10" height="10" fill="#0080ff" stroke="#5a5a5a" />)}
        <path d="M249 59.500H293M302 59.500H346M297.500 11V54M297.500 65V108" stroke="#e6e6e6" />
        <rect x="293.500" y="54.500" width="8" height="10" stroke="#f4f4f4" />
        <path d="M8.500 84V135M8 134.500H59" stroke="#cfcfcf" />
        <rect x="4.500" y="129.500" width="9" height="9" stroke="#e6e6e6" />
        <text x="10" y="80" fill="#dcdcdc" fontSize="19" fontFamily="Liberation Sans, sans-serif">Y</text>
        <text x="63" y="133" fill="#dcdcdc" fontSize="19" fontFamily="Liberation Sans, sans-serif">X</text>
      </svg>
    </div>
  );
}

function QuickProperties() {
  const cell = "h-[19px] border-b border-r border-[#4c4c4c] pb-0.5 leading-4";
  return (
    <div className="absolute left-[391px] top-[345px] flex h-[112px] w-[383px] bg-[#505050] text-[#f4f4f4]">
      <div className="w-4 pl-1 pt-1">
        <Svg w={8} h={26}>
          {Array.from({ length: 7 }, (_, i) => (
            <g key={i}><path d={`M0 ${i * 4 + 0.5}H8`} stroke="#eee" strokeDasharray="2 1" /><path d={`M0 ${i * 4 + 2}H8`} stroke="#000" strokeDasharray="2 1" strokeWidth="2" /></g>
          ))}
        </Svg>
      </div>
      <div className="flex-1 bg-[#5b5b5b] pt-1">
        <div className="flex items-start">
          <label className="relative ml-px flex h-7 w-80 items-center border border-[#333] bg-linear-to-b from-[#656565] to-[#747474]">
            <select aria-label="객체 유형" className="h-full flex-1 appearance-none bg-transparent pl-[3px] pb-0.5 outline-none"><option>선</option></select>
            <span className="pointer-events-none absolute inset-y-0 right-0 flex w-3.5 items-center justify-center border-l border-[#333]"><Tri /></span>
          </label>
          <button type="button" aria-label="사용자화" className="ml-[7px] mt-[3px] flex size-4 flex-col bg-[#8a8a8a]">
            <span className="h-[3px] w-full bg-[#d8d8d8]" />
            <span className="mt-auto h-[7px] w-full overflow-hidden bg-[#222] text-center font-['Liberation_Sans',sans-serif] text-[7px] font-bold leading-[7px] text-white">CUI</span>
          </button>
        </div>
        <table className="ml-px w-[349px] table-fixed border-collapse border-l border-[#4c4c4c]">
          <tbody>
            <tr><th scope="row" className={`${cell} w-[109px] pl-[5px] text-left font-normal`}>색상</th><td className={`${cell} pl-1 text-[12px]`}><span className="flex items-center gap-[7px]"><span className="size-2.5 border border-black bg-white" />ByLayer</span></td></tr>
            <tr><th scope="row" className={`${cell} pl-[5px] text-left font-normal`}>도면층</th><td className={`${cell} pl-0.5 text-[12px]`}>0</td></tr>
            <tr><th scope="row" className={`${cell} pl-[5px] text-left font-normal`}>선종류</th><td className={`${cell} pl-1 text-[12px]`}><span className="flex items-center gap-1.5"><span className="h-px w-[62px] bg-white" />ByLayer</span></td></tr>
            <tr><th scope="row" className={`${cell} pl-[5px] text-left font-normal`}>길이</th><td className={`${cell} pl-0.5 text-[12px] text-[#a8a8a8]`}>1037.5942</td></tr>
          </tbody>
        </table>
      </div>
      <div className="flex w-[17px] flex-col items-center gap-1 pt-1.5">
        <button type="button" aria-label="닫기"><Svg w={8} h={8}><path d="M1 0L7 8M7 0L1 8" stroke="#fff" strokeWidth="2" /></Svg></button>
        <button type="button" aria-label="옵션"><Svg w={8} h={8}><path d="M1 1.500H7M1 4.500H7M1 7.500H4" stroke="#fff" /><path d="M4 6H8L6 8Z" fill="#fff" /></Svg></button>
      </div>
    </div>
  );
}

function DynamicInput() {
  return (
    <div className="absolute left-[453px] top-[566px] text-[12px] text-black">
      <div className="flex h-5 w-[49px] items-center border border-[#444] bg-white pl-1">
        <input aria-label="동적 입력" defaultValue="1" className="w-[7px] bg-transparent pb-0.5 text-[#222] outline-none" />
        <span className="h-[15px] w-px bg-black" />
      </div>
      <div className="flex h-32 w-[100px] border border-[#666] bg-white">
        <ul role="listbox" aria-label="명령 제안" className="ml-5 flex-1">
          {SUGGESTIONS.map((s, i) => (
            <li role="option" aria-selected={i === 0} key={s} className={i === 0 ? "h-[18px] bg-[#0078d7] pl-0.5 leading-[17px] text-white" : "h-[18px] pl-0.5 leading-[17px]"}>{s}</li>
          ))}
        </ul>
        <div className="ml-px w-4 bg-[#f0f0f0] pl-[7px] pt-[17px]"><div className="h-[59px] w-0.5 bg-[#858585]" /></div>
      </div>
    </div>
  );
}

function ViewCube() {
  return (
    <div className="absolute right-3 top-4 flex w-[142px] flex-col items-center text-[#8f8f8f]">
      <div className="grid size-[132px] grid-cols-[1fr_52px_1fr] grid-rows-[1fr_52px_1fr] place-items-center text-[19px] leading-none">
        <div className="col-span-3 col-start-1 row-span-3 row-start-1 size-[120px] rounded-full border-[12px] border-[#282828]" />
        <button type="button" className="relative col-start-2 row-start-1 mb-[22px]">북</button>
        <button type="button" className="relative col-start-1 row-start-2 mr-6">서</button>
        <button type="button" className="relative col-start-2 row-start-2 flex size-[52px] items-center justify-center border border-[#707070] bg-[#a5a5a5]">
          <span className="flex size-8 items-center justify-center whitespace-nowrap bg-[#9a9ba2] pb-0.5 text-[13px] text-[#3b3c42]">평면도</span>
        </button>
        <button type="button" className="relative col-start-3 row-start-2 ml-5">동</button>
        <button type="button" className="relative col-start-2 row-start-3 mt-5">남</button>
      </div>
      <button type="button" className="mt-[21px] flex h-[18px] w-12 items-center gap-[7px] rounded-[5px] border-2 border-[#77747f] bg-[#8f8d97] pl-[3px] font-['Liberation_Sans',sans-serif] text-[11px] text-[#46454c]">
        WCS<Svg w={8} h={5}><path d="M.500 .500H7.500L4 4.500Z" stroke="#b5b3bd" /></Svg>
      </button>
    </div>
  );
}

function NavBar() {
  const s = "#262626";
  return (
    <div className="absolute right-1 top-[212px] flex h-[212px] w-8 flex-col items-center rounded-[3px] border border-[#555] bg-[#404040]">
      <button type="button" aria-label="탐색 막대 닫기" className="ml-auto"><Svg w={10} h={10}><circle cx="5" cy="5" r="4" fill={s} /><path d="M3 3L7 7M7 3L3 7" stroke="#555" /></Svg></button>
      <button type="button" aria-label="스티어링 휠" className="mt-2 flex flex-col items-center gap-2">
        <Svg w={24} h={24}><path d="M23 1V12A11 11 0 1 1 12 1Z" stroke={s} strokeWidth="1.300" /><circle cx="12" cy="12" r="6" stroke={s} strokeWidth="2" /><path d="M7 17L4 20M17 17L20 20" stroke={s} /></Svg>
        <Tri color={s} />
      </button>
      <span className="mt-1 h-px w-[26px] bg-[#555]" />
      <button type="button" aria-label="초점이동" className="mt-0.5"><Svg w={24} h={24}><path d="M6 18L1 12C1 10 3 10 4 11L7 14L5 4C5 2 7 2 8 4L9.500 11L10 2.500C10 .500 12.500 .500 12.500 2.500L13 11L15 3C15.500 1 18 2 17.500 4L17 13L20 8C21 6 23 7 22.500 9L19 18L17 23H9Z" stroke={s} strokeWidth="1.300" /></Svg></button>
      <button type="button" aria-label="줌 범위" className="mt-0.5 flex flex-col items-center gap-1.5">
        <Svg w={24} h={26}><path d="M2 2L14 14M15 2L2 15" stroke={s} strokeWidth="1.500" /><path d="M0 0H5L0 5ZM17 0V5L12 0ZM0 17V12L5 17Z" fill={s} /><circle cx="16" cy="16" r="5" fill="#404040" stroke={s} strokeWidth="1.500" /><path d="M19 19L24 24" stroke={s} strokeWidth="3" /></Svg>
        <Tri color={s} />
      </button>
      <button type="button" aria-label="궤도" className="mt-1 flex flex-col items-center gap-2">
        <Svg w={24} h={24}><path d="M10 22V6H8L12 1L16 6H14V22Z" stroke={s} /><path d="M14 10C26 10 26 18 12 18H5M10 10C-1 11 -1 15 4 17" stroke={s} strokeWidth="1.300" /><path d="M3 17L9 13V21Z" fill={s} /></Svg>
        <Tri color={s} />
      </button>
      <span className="mt-1 h-px w-[26px] bg-[#555]" />
      <button type="button" aria-label="ShowMotion" className="mt-1"><Svg w={24} h={24}><path d="M1 1H7V7H1ZM9 1H15V7H9ZM17 1H23V7H17ZM1 10H17V23H1Z" stroke={s} strokeWidth="1.300" /><path d="M6 12L13 16.500L6 21Z" fill={s} /></Svg></button>
      <button type="button" aria-label="사용자화" className="ml-auto mt-auto"><Svg w={10} h={10}><circle cx="5" cy="5" r="4" fill={s} /><path d="M3 4H7M3 6H7" stroke="#555" /></Svg></button>
    </div>
  );
}

function CommandHistory() {
  const line = "rounded-xs bg-[#1e1e1e] px-1 leading-[15px] h-[15px] whitespace-pre";
  return (
    <div className="absolute bottom-[30px] left-[1059px] flex flex-col items-start gap-[5px] font-['Liberation_Mono','Noto_Sans_CJK_KR',monospace] text-[13px]">
      <p className={`${line} text-[#484848]`}>다음 점 지정 또는 [명령 취소(U)]: *취소*</p>
      <p className={`${line} text-[#565656]`}>명령: *취소*</p>
      <p className={`${line} text-[#666]`}>명령: 반대 구석 지정 또는 [울타리(F)/윈도우폴리곤(WP)/걸침폴리곤(CP)]:</p>
    </div>
  );
}

function CommandLine() {
  return (
    <div className="absolute bottom-0 left-[386px] flex h-[27px] w-[1150px] border border-[#6f6f6f]">
      <div className="flex w-[52px] items-center bg-linear-to-b from-[#4c4c4c] to-[#747474] pl-[3px]">
        <Svg w={6} h={20}><path d="M1 0V20M5 0V20" stroke="#a8a8a8" strokeWidth="2" strokeDasharray="2 1" /></Svg>
        <button type="button" aria-label="명령행 닫기" className="ml-1"><Svg w={10} h={10}><path d="M1 1L9 9M9 1L1 9" stroke="#f2f2f2" strokeWidth="2" /></Svg></button>
        <button type="button" aria-label="사용자화" className="ml-2.5"><Svg w={16} h={16}><path d="M6 6L14 14" stroke="#dfe5ec" strokeWidth="3" /><path d="M3 0L5 3L3 5L0 3C-1 6 3 8 6 7L7 6C8 3 6 0 3 0Z" fill="#dfe5ec" /></Svg></button>
      </div>
      <label className="flex flex-1 items-center bg-linear-to-b from-[#b2b2b2] from-[36%] to-[#fafafa] to-[36%] pl-[5px]">
        <Svg w={16} h={14}><rect x=".5" y=".5" width="15" height="13" fill="#dfe4e8" stroke="#9aa2a8" /><path d="M3 4L6.500 7L3 10M8 10.500H12" stroke="#6c757d" /></Svg>
        <span className="ml-1"><Tri color="#888" /></span>
        <input aria-label="명령 입력" placeholder="명령 입력" className="ml-[7px] h-full flex-1 bg-transparent pb-0.5 font-['Liberation_Mono','Noto_Sans_CJK_KR',monospace] text-[14px] italic outline-none placeholder:text-[#8c8c8c]" />
        <span className="mr-[3px]"><Svg w={8} h={4}><path d="M0 4L4 0L8 4Z" fill="#555" /></Svg></span>
      </label>
    </div>
  );
}

function Workspace() {
  return (
    <main className="relative grid min-h-[600px] flex-1 grid-cols-[1fr_16px] grid-rows-[1fr_17px] bg-[#f0f0f0]">
      <div className="bg-black" />
      <div className="flex items-end justify-center pb-4"><div className="h-[17px] w-0.5 bg-[#858585]" /></div>
      <div className="flex items-center justify-end pr-[17px]"><div className="h-0.5 w-[17px] bg-[#858585]" /></div>
      <div className="pointer-events-none absolute inset-0 right-4 [&>*]:pointer-events-auto">
        <Entities />
        <QuickProperties />
        <DynamicInput />
        <ViewCube />
        <NavBar />
        <CommandHistory />
        <CommandLine />
      </div>
    </main>
  );
}

/* ---------- status bar ---------- */

function Cell({ label, w = "w-6", on = false, children }: Kids & { label: string; w?: string; on?: boolean }) {
  return (
    <button type="button" aria-label={label} className={`flex h-[22px] shrink-0 items-center justify-center ${w} ${on ? "bg-[#5f8fc4]" : ""}`}>{children}</button>
  );
}

function Cluster({ children, w }: Kids & { w: string }) {
  return <div className={`flex h-[27px] shrink-0 items-center border border-[#7d7d7d] bg-[#4f4f4f] ${w}`}>{children}</div>;
}

const Ship = () => <path d="M10 3L12 10L18 18L10 15.500L2 18L8 10Z" fill="#e6e6e6" />;

function StatusBar() {
  return (
    <footer className="flex h-7 items-start border-t border-[#6a6a6a] bg-[#383838] leading-[15px] text-[#f4f4f4]">
      <div className="flex items-start pl-3">
        <button type="button" className="relative flex h-[18px] w-[46px] items-center justify-center pb-1 font-medium text-white">
          <span className="absolute inset-y-0 -left-1"><Svg w={54} h={18}><path d="M0 0H54C46 2 49 17 43 17H11C5 17 6 2 0 0Z" fill="#7f7f7f" stroke="#8a8a8a" /></Svg></span>
          <span className="relative">모형</span>
        </button>
        <button type="button" className="relative ml-[3px] flex h-[18px] w-[50px] items-center justify-center pb-1 text-[#b0b0b0]">
          <span className="absolute inset-y-0 -left-1"><Svg w={58} h={18}><path d="M0 0H58C50 2 53 17 47 17H11C5 17 6 2 0 0Z" fill="#5a5a5a" stroke="#6a6a6a" /></Svg></span>
          <span className="relative">배치1</span>
        </button>
        <button type="button" aria-label="새 배치" className="relative ml-[5px] flex h-[18px] w-6 items-center justify-center">
          <span className="absolute inset-0"><Svg w={24} h={18}><path d="M0 17C2 8 3 1 12 1H23C23 10 20 17 14 17Z" fill="#505050" stroke="#5e5e5e" /></Svg></span>
          <span className="relative"><Svg w={8} h={8}><path d="M4 0V8M0 4H8" stroke="#dcdcdc" strokeWidth="2" /></Svg></span>
        </button>
      </div>
      <div className="ml-auto flex">
        <Cluster w="w-[30px]"><button type="button" className="ml-[3px] whitespace-nowrap pb-0.5 font-medium text-white">모형</button></Cluster>
        <Cluster w="w-[66px]">
          <Cell label="그리드"><Svg><path d="M4.500 0V16M9.500 0V16M13.500 0V16M0 3.500H16M0 8.500H16M0 12.500H16" stroke={L} /></Svg></Cell>
          <Cell label="스냅"><Svg w={14} h={14}><path d="M1 2H14M1 7H14M1 12H14" stroke={L} strokeWidth="2" strokeDasharray="2 3" /></Svg></Cell>
          <Cell label="스냅 설정" w="w-3.5"><Tri big /></Cell>
        </Cluster>
        <Cluster w="w-[170px]">
          <Cell label="직교" on w="w-[23px]"><Svg><path d="M1.500 0V15.500H16M1.500 10.500H6.500V15.500" stroke="#fff" /></Svg></Cell>
          <Cell label="극좌표 추적"><Svg><circle cx="7" cy="9" r="6.500" stroke={L} /><path d="M7 9H16M7 9L14 1" stroke={L} strokeWidth="1.500" /></Svg></Cell>
          <Cell label="극좌표 설정" w="w-4"><Tri big /></Cell>
          <Cell label="등각투영"><Svg><path d="M8 0V16" stroke="#58d68d" /><path d="M2 2L14 14" stroke="#e86a6a" /><rect x="7" y="7" width="3" height="3" fill="#fff" /></Svg></Cell>
          <Cell label="등각투영 설정" w="w-4"><Tri big /></Cell>
          <Cell label="객체 스냅 추적" on w="w-[22px]"><Svg><path d="M15 2L1 14.500H16" stroke="#fff" strokeWidth="1.200" /><rect x="9" y="6" width="3" height="3" fill="#fff" /></Svg></Cell>
          <span className="w-0.5" />
          <Cell label="객체 스냅" on w="w-[23px]"><Svg><path d="M.500 .500H4.500V4.500H.500ZM7 2.500H15.500V15.500H2.500V7" stroke="#fff" strokeWidth="1.200" /></Svg></Cell>
          <Cell label="객체 스냅 설정" w="w-[18px]"><Tri big /></Cell>
        </Cluster>
        <Cluster w="w-[107px]">
          <Cell label="주석 객체 표시" on w="w-[22px]"><Svg w={20} h={20}><Ship /><circle cx="15" cy="5" r="2.500" stroke="#fff" /></Svg></Cell>
          <Cell label="주석 축척 자동 추가" w="w-[25px]"><Svg w={20} h={20}><Ship /><path d="M15 1L11 7H14L12 11L18 5H15L18 2Z" fill="#e6e6e6" /></Svg></Cell>
          <Cell label="주석 축척"><Svg w={20} h={20}><Ship /></Svg></Cell>
          <button type="button" className="ml-1 flex items-center gap-0.5 whitespace-nowrap text-[11px] font-medium">1:1<Tri big /></button>
        </Cluster>
        <Cluster w="w-10">
          <Cell label="작업공간 전환"><IcGear /></Cell>
          <Cell label="작업공간 목록" w="w-3.5"><Tri big /></Cell>
        </Cluster>
        <Cluster w="w-[27px]"><Cell label="주석 감시"><Svg><path d="M8 0V16M0 8H16" stroke={L} strokeWidth="2" /></Svg></Cell></Cluster>
        <Cluster w="w-[27px]"><Cell label="객체 분리"><Svg><path d="M.500 .500H5.500V6.500H.500ZM7 10L10.500 15.500H3.500Z" stroke={L} /><circle cx="12.500" cy="6.500" r="3" stroke={L} /></Svg></Cell></Cluster>
        <Cluster w="w-[33px]"><span className="ml-[3px]"><Cell label="그래픽 성능"><Svg><rect x="1" y="0" width="13" height="12" fill="#f2f2f2" /><path d="M2 6L5 3L8 8L11 3L14 7" stroke="#3a8fd0" strokeWidth="1.300" /><path d="M11.500 6L16 16H7Z" fill="#e8833a" /><path d="M11.500 9V13" stroke="#fff" /></Svg></Cell></span></Cluster>
        <Cluster w="w-[50px]">
          <Cell label="화면 정리"><Svg><path d="M.500 2.500H15.500V14.500H.500Z" stroke={L} /><path d="M9 8L12 5M4 12L7 9M9.500 5H12.500V8M3.500 9V12H6.500" stroke={L} /></Svg></Cell>
          <Cell label="사용자화"><Svg><path d="M0 2H16M0 8H16M0 14H16" stroke={L} strokeWidth="2" /></Svg></Cell>
        </Cluster>
      </div>
    </footer>
  );
}

export default function App() {
  return (
    <div className="flex min-h-screen w-full bg-[#e6e6e6] pb-0.5 font-['Open_Sans','Noto_Sans_CJK_KR',sans-serif] text-[13px] leading-[15px]">
      <div className="flex w-[3px] shrink-0 flex-col bg-white"><span className="mt-6 h-6 bg-[#dcdcdc]" /></div>
      <div className="flex min-w-0 flex-1 flex-col">
        <Header />
        <RibbonTabs />
        <Ribbon />
        <FileTabs />
        <Workspace />
        <StatusBar />
      </div>
    </div>
  );
}
